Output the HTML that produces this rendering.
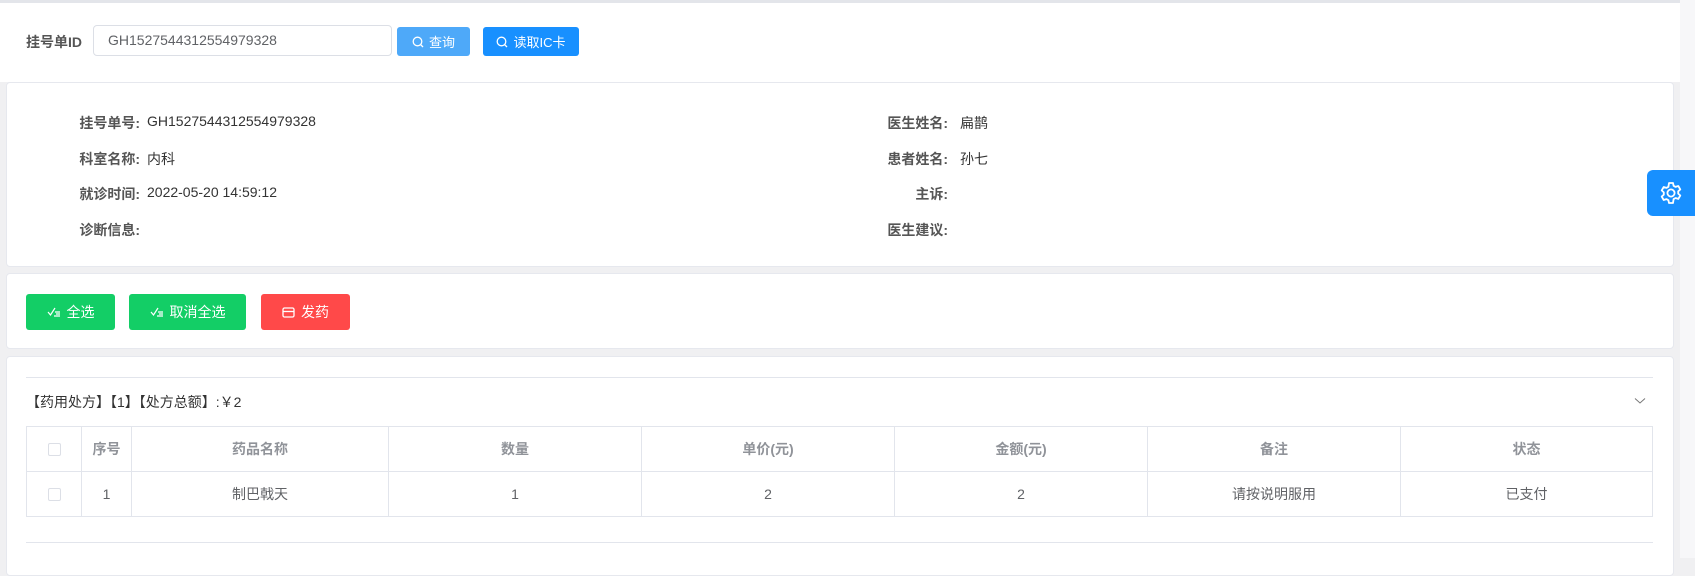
<!DOCTYPE html>
<html><head><meta charset="utf-8"><style>
*{box-sizing:border-box;margin:0;padding:0}
body{width:1695px;height:558px;overflow:hidden;background:#f0f0f2;font-family:"Liberation Sans","Noto Sans CJK SC",sans-serif;font-size:14px;color:#333;position:relative}
.a{position:absolute}
.top{left:0;top:0;width:1680px;height:82px;background:#fff;border-top:3px solid #e3e5ea}
.card{position:absolute;left:6px;width:1668px;background:#fff;border:1px solid #e6e8ee;border-radius:4px}
.lbl{font-weight:bold;color:#555;text-align:right;width:80px}
.btn{position:absolute;color:#fff;border-radius:3px;display:flex;align-items:center;justify-content:center;font-size:13px}
.cell{position:absolute;display:flex;align-items:center;justify-content:center;border-right:1px solid #e2e5ec}
.cb{width:13px;height:13px;border:1px solid #dcdfe6;border-radius:2px;background:#fff}
</style></head><body>
<div class="a" style="left:1680px;top:0;width:15px;height:558px;background:#f7f7f9"></div>
<div class="a top"></div>
<div class="a" style="left:26px;top:32px;font-weight:bold;color:#555;font-size:14px">挂号单ID</div>
<div class="a" style="left:93px;top:25px;width:299px;height:31px;border:1px solid #dcdfe6;border-radius:4px;padding-left:14px;line-height:29px;color:#606266">GH1527544312554979328</div>
<div class="btn" style="left:397px;top:27px;width:73px;height:29px;background:#4ea9f9"><svg width="12" height="12" viewBox="0 0 12 12" style="margin-right:5px"><circle cx="5.5" cy="5.5" r="4.3" fill="none" stroke="#fff" stroke-width="1.3"/><path d="M8.5 8.5L11 11" stroke="#fff" stroke-width="1.3"/></svg>查询</div>
<div class="btn" style="left:483px;top:27px;width:96px;height:29px;background:#1890ff"><svg width="12" height="12" viewBox="0 0 12 12" style="margin-right:5px"><circle cx="5.5" cy="5.5" r="4.3" fill="none" stroke="#fff" stroke-width="1.3"/><path d="M8.5 8.5L11 11" stroke="#fff" stroke-width="1.3"/></svg>读取IC卡</div>

<div class="card" style="top:82px;height:185px">
<div class="a lbl" style="left:53px;top:30px">挂号单号:</div><div class="a" style="left:140px;top:30px">GH1527544312554979328</div>
<div class="a lbl" style="left:53px;top:66px">科室名称:</div><div class="a" style="left:140px;top:66px">内科</div>
<div class="a lbl" style="left:53px;top:101px">就诊时间:</div><div class="a" style="left:140px;top:101px">2022-05-20 14:59:12</div>
<div class="a lbl" style="left:53px;top:137px">诊断信息:</div>
<div class="a lbl" style="left:861px;top:30px">医生姓名:</div><div class="a" style="left:953px;top:30px">扁鹊</div>
<div class="a lbl" style="left:861px;top:66px">患者姓名:</div><div class="a" style="left:953px;top:66px">孙七</div>
<div class="a lbl" style="left:861px;top:101px">主诉:</div>
<div class="a lbl" style="left:861px;top:137px">医生建议:</div>
</div>

<div class="card" style="top:273px;height:76px"></div>
<div class="btn" style="left:26px;top:294px;width:89px;height:36px;background:#13ce66;font-size:14px"><svg width="14" height="10" viewBox="0 0 14 10" style="margin-right:6px"><path d="M1 5L3.5 8L8 1M8 5H13M9 7H13M7 9H13" fill="none" stroke="#fff" stroke-width="1.2"/></svg>全选</div>
<div class="btn" style="left:129px;top:294px;width:117px;height:36px;background:#13ce66;font-size:14px"><svg width="14" height="10" viewBox="0 0 14 10" style="margin-right:6px"><path d="M1 5L3.5 8L8 1M8 5H13M9 7H13M7 9H13" fill="none" stroke="#fff" stroke-width="1.2"/></svg>取消全选</div>
<div class="btn" style="left:261px;top:294px;width:89px;height:36px;background:#ff4949;font-size:14px"><svg width="13" height="11" viewBox="0 0 13 11" style="margin-right:6px"><rect x="1" y="1" width="11" height="9" rx="1.5" fill="none" stroke="#fff" stroke-width="1.3"/><path d="M1 4.5H12" stroke="#fff" stroke-width="1.3"/></svg>发药</div>

<div class="card" style="top:356px;height:220px"></div>
<div class="a" style="left:26px;top:377px;width:1627px;height:1px;background:#e2e5ec"></div>
<div class="a" style="left:26px;top:392px;font-size:14px;color:#333">【药用处方】【1】【处方总额】:￥2</div>
<svg class="a" style="left:1634px;top:397px" width="12" height="8" viewBox="0 0 12 8"><path d="M1 1.5L6 6L11 1.5" fill="none" stroke="#777" stroke-width="1"/></svg>
<div class="a" style="left:26px;top:426px;width:1627px;height:91px;border:1px solid #e2e5ec">
<div class="a" style="left:0;top:44px;width:1625px;height:1px;background:#e2e5ec"></div>
<div style="position:absolute;top:0;left:0;width:1625px;height:44px;color:#909399;font-weight:bold">
<div class="cell" style="left:0;width:55px;height:44px"><div class="cb"></div></div>
<div class="cell" style="left:55px;width:50px;height:44px">序号</div>
<div class="cell" style="left:105px;width:257px;height:44px">药品名称</div>
<div class="cell" style="left:362px;width:253px;height:44px">数量</div>
<div class="cell" style="left:615px;width:253px;height:44px">单价(元)</div>
<div class="cell" style="left:868px;width:253px;height:44px">金额(元)</div>
<div class="cell" style="left:1121px;width:253px;height:44px">备注</div>
<div class="cell" style="left:1374px;width:251px;height:44px;border-right:none">状态</div>
</div>
<div style="position:absolute;top:45px;left:0;width:1625px;height:44px;color:#606266">
<div class="cell" style="left:0;width:55px;height:44px"><div class="cb"></div></div>
<div class="cell" style="left:55px;width:50px;height:44px">1</div>
<div class="cell" style="left:105px;width:257px;height:44px">制巴戟天</div>
<div class="cell" style="left:362px;width:253px;height:44px">1</div>
<div class="cell" style="left:615px;width:253px;height:44px">2</div>
<div class="cell" style="left:868px;width:253px;height:44px">2</div>
<div class="cell" style="left:1121px;width:253px;height:44px">请按说明服用</div>
<div class="cell" style="left:1374px;width:251px;height:44px;border-right:none">已支付</div>
</div>
</div>
<div class="a" style="left:26px;top:542px;width:1627px;height:1px;background:#e2e5ec"></div>

<div class="a" style="left:1647px;top:170px;width:48px;height:46px;background:#1890ff;border-radius:6px 0 0 6px;display:flex;align-items:center;justify-content:center">
<svg width="24" height="24" viewBox="0 0 24 24"><path d="M10 2h4l.6 2.8 2 1.1 2.7-.9 2 3.4-2.1 1.9v2.3l2.1 1.9-2 3.4-2.7-.9-2 1.1L14 22h-4l-.6-2.8-2-1.1-2.7.9-2-3.4 2.1-1.9v-2.3L2.7 9.4l2-3.4 2.7.9 2-1.1z" fill="none" stroke="#fff" stroke-width="1.8" stroke-linejoin="round"/><circle cx="12" cy="12" r="3.6" fill="none" stroke="#fff" stroke-width="1.8"/></svg>
</div>
</body></html>
